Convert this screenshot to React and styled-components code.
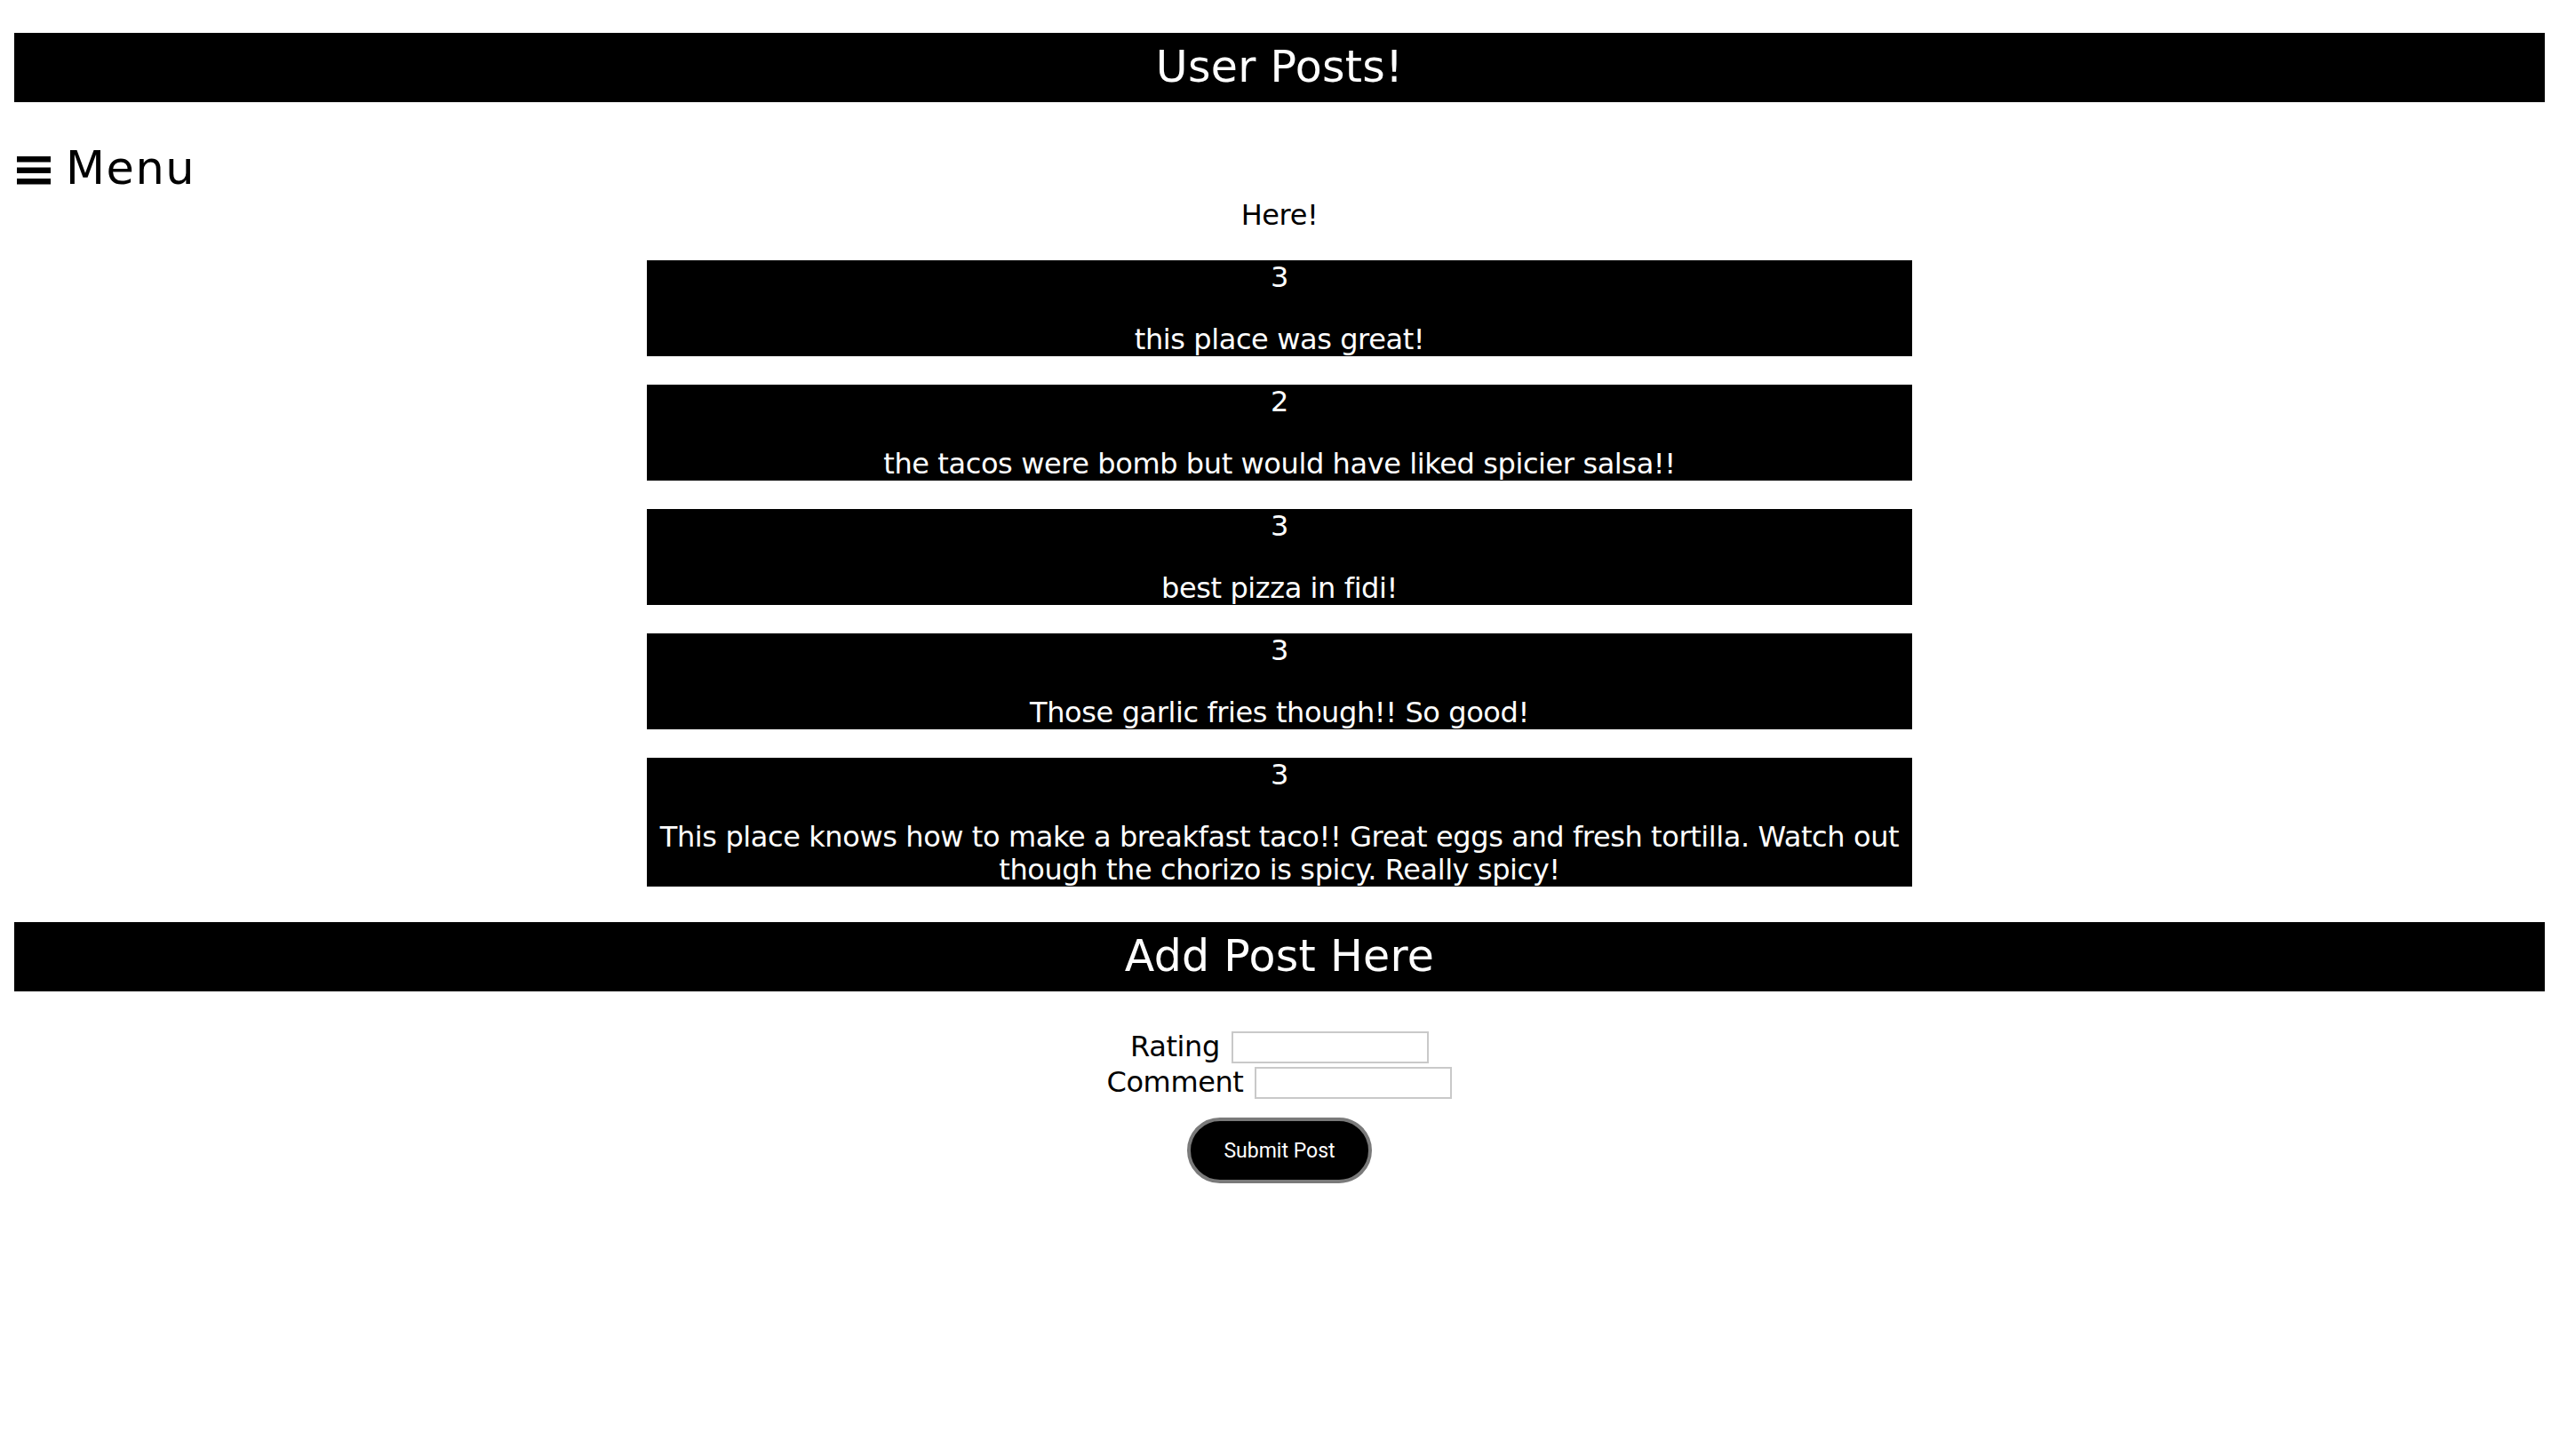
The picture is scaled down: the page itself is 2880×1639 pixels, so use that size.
import React, { useState } from 'react';
import styled, { createGlobalStyle } from 'styled-components';

const posts = [
  { id: 1, rating: 3, comment: 'this place was great!' },
  { id: 2, rating: 2, comment: 'the tacos were bomb but would have liked spicier salsa!!' },
  { id: 3, rating: 3, comment: 'best pizza in fidi!' },
  { id: 4, rating: 3, comment: 'Those garlic fries though!! So good!' },
  {
    id: 5,
    rating: 3,
    comment:
      'This place knows how to make a breakfast taco!! Great eggs and fresh tortilla. Watch out though the chorizo is spicy. Really spicy!',
  },
];

const GlobalStyle = createGlobalStyle`
  html, body {
    background: #fff;
  }
  body {
    margin: 16px;
    font-family: 'DejaVu Sans', 'Open Sans', sans-serif;
    font-size: 32px;
    line-height: 38px;
    letter-spacing: -0.4px;
    color: #000;
  }
`;

const Page = styled.div`
  display: flex;
  flex-direction: column;
`;

const TitleBar = styled.h1`
  margin: ${(p) => p.$top}px 0 0;
  height: 78px;
  display: flex;
  align-items: center;
  justify-content: center;
  background: #000;
  color: #fff;
  font-size: 49px;
  font-weight: 400;
  letter-spacing: 0.3px;
`;

const MenuButton = styled.div`
  margin-top: 45px;
  height: 60px;
  display: flex;
  align-items: center;
  gap: 17px;
  padding-left: 3px;
  font-size: 51px;
  letter-spacing: 1.5px;
  cursor: pointer;
`;

const MenuIcon = styled.svg`
  width: 38px;
  height: 32px;
  margin-top: 4px;
`;

const Intro = styled.p`
  margin: 3px 0 0;
  text-align: center;
`;

const PostList = styled.div`
  width: 50%;
  margin: 32px auto 0;
  display: flex;
  flex-direction: column;
  gap: 32px;
`;

const PostCard = styled.div`
  background: #000;
  color: #fff;
  text-align: center;
  display: flex;
  flex-direction: column;
  gap: 33px;
`;

const PostLine = styled.div`
  line-height: ${(p) => (p.$tight ? 37 : 38)}px;
`;

const PostForm = styled.form`
  margin-top: 43px;
  display: flex;
  flex-direction: column;
  align-items: center;
`;

const FieldRow = styled.label`
  height: 40px;
  display: flex;
  align-items: center;
  gap: 13px;
`;

const FieldLabel = styled.span`
  line-height: 38px;
  margin-top: -2px;
`;

const TextInput = styled.input`
  box-sizing: border-box;
  width: 222px;
  height: 36px;
  padding: 2px 4px;
  border: 2px solid #c9c9c9;
  border-radius: 0;
  font-family: 'Liberation Sans', Arial, sans-serif;
  font-size: 24px;
  outline: none;
`;

const SubmitButton = styled.button`
  margin-top: 19px;
  box-sizing: border-box;
  width: 208px;
  height: 74px;
  border: 4px solid #7a7a7a;
  border-radius: 37px;
  background: #000;
  color: #fff;
  font-family: Roboto, 'Liberation Sans', sans-serif;
  font-size: 23px;
  font-weight: 400;
  cursor: pointer;
`;

const App = () => {
  const [rating, setRating] = useState('');
  const [comment, setComment] = useState('');

  return (
    <Page>
      <GlobalStyle />
      <TitleBar $top={21}>User Posts!</TitleBar>
      <MenuButton>
        <MenuIcon viewBox="0 0 38 32">
          <rect x="0" y="0" width="38" height="6.5" fill="#000" />
          <rect x="0" y="12.5" width="38" height="6.5" fill="#000" />
          <rect x="0" y="25" width="38" height="6.5" fill="#000" />
        </MenuIcon>
        <span>Menu</span>
      </MenuButton>
      <Intro>Here!</Intro>
      <PostList>
        {posts.map((post) => (
          <PostCard key={post.id}>
            <PostLine>{post.rating}</PostLine>
            <PostLine $tight>{post.comment}</PostLine>
          </PostCard>
        ))}
      </PostList>
      <TitleBar $top={40}>Add Post Here</TitleBar>
      <PostForm onSubmit={(e) => e.preventDefault()}>
        <FieldRow>
          <FieldLabel>Rating</FieldLabel>
          <TextInput value={rating} onChange={(e) => setRating(e.target.value)} />
        </FieldRow>
        <FieldRow>
          <FieldLabel>Comment</FieldLabel>
          <TextInput value={comment} onChange={(e) => setComment(e.target.value)} />
        </FieldRow>
        <SubmitButton type="submit">Submit Post</SubmitButton>
      </PostForm>
    </Page>
  );
};

export default App;
